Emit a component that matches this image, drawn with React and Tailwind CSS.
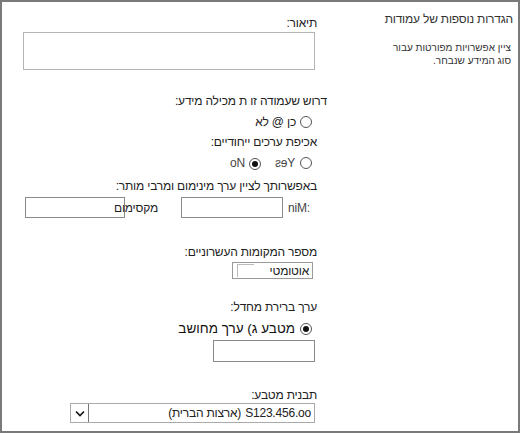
import React from "react";

function Radio({ checked }) {
  return (
    <span className="relative inline-flex h-[12px] w-[12px] shrink-0 items-center justify-center rounded-full border border-[#555] bg-white">
      {checked && <span className="h-[6px] w-[6px] rounded-full bg-[#111]" />}
    </span>
  );
}

export default function App() {
  return (
    <div
      dir="rtl"
      className="flex h-[433px] w-[520px] border-2 border-[#7a7a7a] bg-white font-['Liberation_Sans',Arial,sans-serif] text-[12px] tracking-[-0.2px] text-[#222]"
    >
      {/* Right column */}
      <div className="flex w-[188px] shrink-0 flex-col pr-[5px] pt-[9px]">
        <div className="text-[12px] leading-4 text-[#333]">הגדרות נוספות של עמודות</div>
        <div className="mt-[14px] pr-[2px] text-[10px] leading-[13px] tracking-normal text-[#333]">
          <div>ציין אפשרויות מפורטות עבור</div>
          <div>סוג המידע שנבחר.</div>
        </div>
      </div>

      {/* Left column */}
      <div className="flex flex-1 flex-col items-start pr-[13px]">
        <div className="mt-[13px] leading-4">תיאור:</div>
        <div className="mr-[2px] mt-[1px] h-[38px] w-[292px] border border-[#b4b4b4]" />

        <div className="-mr-[10px] mt-[23px] leading-4">דרוש שעמודה זו ת מכילה מידע:</div>
        <div className="mr-[5px] mt-[5px] flex h-4 items-center gap-[4px]">
          <Radio />
          <span>כן @ לא</span>
        </div>

        <div className="mt-[4px] leading-4">אכיפת ערכים ייחודיים:</div>
        <div className="mr-[5px] mt-[5px] flex h-4 items-center text-[#444]">
          <Radio />
          <span dir="ltr" className="mr-[5px]">ƨɘY</span>
          <span className="mr-[14px]"><Radio checked /></span>
          <span dir="ltr" className="mr-[4px]">oN</span>
        </div>

        <div className="mt-[7px] leading-4">באפשרותך לציין ערך מינימום ומרבי מותר:</div>
        <div className="mt-[3px] flex items-center">
          <span dir="ltr" className="mr-[2px] w-[27px] text-left text-[#444]">niM:</span>
          <div className="mr-[5px] h-[21px] w-[102px] border border-[#8a8a8a]" />
          <span className="relative z-10 w-[56px] whitespace-nowrap pr-[23px]">מקסימום</span>
          <div className="h-[21px] w-[100px] border border-[#8a8a8a]" />
        </div>

        <div className="mt-[26px] leading-4">מספר המקומות העשרוניים:</div>
        <div className="mr-[4px] mt-[2px] flex h-[17px] w-[81px] items-center justify-between border border-[#9a9a9a] pl-[4px] pr-[3px]">
          <span className="leading-4">אוטומטי</span>
          <span className="h-[13px] w-[17px] border-l border-t border-[#bbb]" />
        </div>

        <div className="mt-[20px] leading-4">ערך ברירת מחדל:</div>
        <div className="mr-[5px] mt-[6px] flex h-4 items-center gap-[5px] text-[13.5px] tracking-normal text-[#111]">
          <Radio checked />
          <span>מטבע ג) ערך מחושב</span>
        </div>
        <div className="mr-[2px] mt-[3px] h-[22px] w-[102px] border border-[#888]" />

        <div className="mt-[25px] leading-4">תבנית מטבע:</div>
        <div className="mr-[2px] flex h-[20px] w-[245px] items-center justify-between border border-[#aaa]">
          <span className="flex items-center gap-[4px] pr-[3px] leading-4">
            <span dir="ltr">S123.456.oo</span>
            <span>(ארצות הברית)</span>
          </span>
          <span className="flex h-full w-[18px] items-center justify-center border-r border-[#777] bg-white">
            <svg width="10" height="7" viewBox="0 0 10 7">
              <path d="M1 1.5 L5 5.5 L9 1.5" fill="none" stroke="#111" strokeWidth="1.6" />
            </svg>
          </span>
        </div>
      </div>
    </div>
  );
}
